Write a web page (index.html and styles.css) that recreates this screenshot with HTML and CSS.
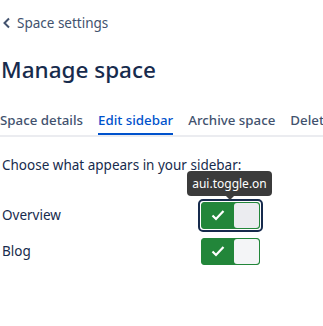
FILE: index.html
```html
<!DOCTYPE html>
<html lang="en">
<head>
    <meta charset="UTF-8">
    <title>Manage space</title>
    <link rel="stylesheet" href="styles.css">
</head>
<body>
    <a class="back" href="#">
        <svg width="10" height="12" viewBox="0 0 10 12"><path d="M7 1.5 L2.5 6 L7 10.5" fill="none" stroke="#42526e" stroke-width="2"/></svg>
        <span>Space settings</span>
    </a>
    <h1 class="title">Manage space</h1>
    <div class="tabs">
        <span class="tab">Space details</span>
        <span class="tab active">Edit sidebar</span>
        <span class="tab">Archive space</span>
        <span class="tab">Delete space</span>
    </div>
    <p class="intro">Choose what appears in your sidebar:</p>
    <div class="items">
        <div class="row">
            <span class="label">Overview</span>
            <div class="focus">
                <div class="tip">aui.toggle.on</div>
                <div class="toggle">
                    <span class="on">
                        <svg width="14" height="12" viewBox="0 0 14 12"><path d="M1.5 6.5 L5 10 L12.5 2" fill="none" stroke="#fff" stroke-width="2.2"/></svg>
                    </span>
                    <span class="knob"></span>
                </div>
            </div>
        </div>
        <div class="row">
            <span class="label">Blog</span>
            <div class="nofocus">
                <div class="toggle">
                    <span class="on">
                        <svg width="14" height="12" viewBox="0 0 14 12"><path d="M1.5 6.5 L5 10 L12.5 2" fill="none" stroke="#fff" stroke-width="2.2"/></svg>
                    </span>
                    <span class="knob"></span>
                </div>
            </div>
        </div>
    </div>
</body>
</html>
```

FILE: styles.css
```css
*{
    box-sizing: border-box;
}
html,body{
    overflow: hidden;
}
body{
    margin: 0;
    background: #fff;
    font-family: "Noto Sans", "Open Sans", sans-serif;
    color: #172b4d;
    width: 323px;
}
.back{
    display: flex;
    align-items: center;
    gap: 5px;
    padding: 13px 0 0 2px;
    height: 33px;
    color: #42526e;
    text-decoration: none;
    font-size: 13.5px;
}
.title{
    margin: 22px 0 0 1px;
    font-size: 22.5px;
    font-weight: 500;
    line-height: 30px;
    color: #172b4d;
}
.tabs{
    display: flex;
    gap: 15px;
    margin-top: 27px;
    height: 25px;
    border-bottom: 2px solid #ebecf0;
    white-space: nowrap;
    width: 323px;
    overflow: hidden;
}
.tab{
    flex-shrink: 0;
    font-size: 13.3px;
    color: #42526e;
    font-weight: 500;
    height: 23px;
    line-height: 16px;
}
.tab.active{
    color: #0052cc;
    border-bottom: 2px solid #0052cc;
}
.intro{
    margin: 19px 0 0 2px;
    font-size: 13.5px;
    color: #172b4d;
}
.items{
    margin-top: 23px;
}
.row{
    display: flex;
    align-items: center;
    height: 36px;
}
.label{
    width: 198px;
    padding-left: 2px;
    font-size: 13.5px;
}
.focus,.nofocus{
    position: relative;
    border: 2px solid transparent;
    border-radius: 5px;
    padding: 1px;
}
.focus{
    border-color: #172b4d;
}
.toggle{
    display: flex;
    width: 59px;
    height: 27px;
    background: #22863a;
    border: 1px solid #22863a;
    border-radius: 3px;
}
.on{
    flex: 1;
    display: flex;
    align-items: center;
    justify-content: center;
}
.knob{
    width: 25px;
    background: #ebecf0;
    border-radius: 3px;
}
.nofocus .knob{
    background: #f4f5f7;
}
.tip{
    position: absolute;
    left: -13px;
    top: -30px;
    width: 85px;
    height: 25px;
    background: #3b3b3b;
    color: #fff;
    font-size: 12px;
    border-radius: 4px;
    display: flex;
    align-items: center;
    justify-content: center;
}
.tip::after{
    content: "";
    position: absolute;
    left: 39px;
    bottom: -4px;
    border: 4px solid transparent;
    border-bottom: 0;
    border-top-color: #3b3b3b;
}
```
